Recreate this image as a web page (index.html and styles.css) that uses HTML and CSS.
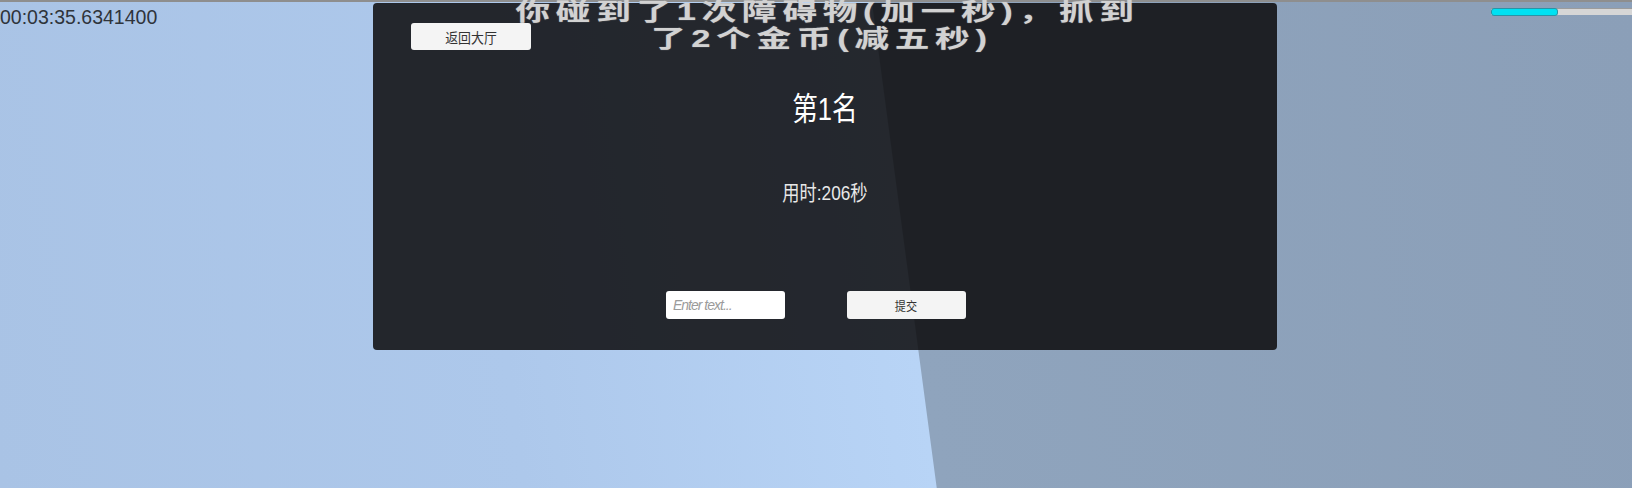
FILE: index.html
```html
<!DOCTYPE html>
<html lang="zh">
<head>
<meta charset="utf-8">
<title>结算</title>
<link rel="stylesheet" href="styles.css">
</head>
<body>
<div class="screen">
  <div class="timer">00:03:35.6341400</div>
  <section class="panel">
    <button class="btn back"><span class="squeeze">返回大厅</span></button>
    <div class="notice">
      <div class="stretch">
        <span class="notice-line">你碰到了1次障碍物(加一秒)，抓到</span>
        <span class="notice-line notice-line-2">了2个金币(减五秒)</span>
      </div>
    </div>
    <div class="rank"><span class="squeeze">第1名</span></div>
    <div class="time"><span class="squeeze">用时:206秒</span></div>
    <div class="form-row">
      <input class="name-input" type="text" placeholder="Enter text...">
      <button class="btn submit"><span class="squeeze">提交</span></button>
    </div>
  </section>
  <div class="progress"><div class="progress-fill" style="width:67px"></div></div>
</div>
</body>
</html>
```

FILE: styles.css
```css
html, body {
  margin: 0;
  padding: 0;
  overflow: hidden;
}

body {
  font-family: "Liberation Sans", "Noto Sans CJK SC", sans-serif;
}

.screen {
  width: 1632px;
  height: 488px;
  box-sizing: border-box;
  border-top: 2px solid #8e8e8e;
  background-origin: border-box;
  background-image: linear-gradient(82.4deg, #a9c3e5 0px, #adc8eb 520px, #b8d4f6 928px, #8fa4bd 929px, #8b9fb8 100%);
  display: grid;
  grid-template-columns: 373px 904px 1fr;
  align-items: start;
}

.timer {
  padding-top: 4px;
  font-size: 19.5px;
  line-height: 22px;
  color: #2f343b;
  white-space: nowrap;
}

.panel {
  margin-top: 1px;
  height: 347px;
  border-radius: 4px;
  background: rgba(10, 9, 11, 0.85);
  display: grid;
  grid-template-columns: 1fr;
  grid-template-rows: auto auto auto auto 1fr;
  justify-items: center;
  align-items: start;
  font-family: "Liberation Sans", "Noto Sans CJK SC", sans-serif;
}

.squeeze {
  display: inline-block;
}

.btn {
  border: none;
  border-radius: 3px;
  background: #f4f4f4;
  color: #333;
  padding: 0;
  font-family: "Liberation Sans", "Noto Sans CJK SC", sans-serif;
  cursor: pointer;
}

.back {
  grid-area: 1 / 1;
  justify-self: start;
  margin: 20px 0 0 38px;
  width: 120px;
  height: 27px;
  font-size: 14px;
}

.back .squeeze {
  transform: scaleX(0.92);
}

.notice {
  grid-area: 1 / 1;
  margin-top: -5px;
  font-size: 24px;
  line-height: 27px;
  font-weight: bold;
  color: #d2d2d2;
  text-align: center;
}

.stretch {
  white-space: nowrap;
  letter-spacing: 4px;
  padding-left: 4px;
  transform: scaleX(1.44);
  text-shadow: 0 0 1px rgba(210, 210, 210, 0.6);
}

.notice-line {
  display: block;
}

.notice-line-2 {
  margin-right: 8px;
}

.rank {
  margin-top: 37px;
  font-size: 32px;
  line-height: 40px;
  color: #ffffff;
}

.rank .squeeze {
  transform: scaleX(0.8);
}

.time {
  margin-top: 52px;
  font-size: 21px;
  line-height: 24px;
  color: #e8e8e8;
}

.time .squeeze {
  transform: scaleX(0.82);
}

.form-row {
  margin-top: 86px;
  display: flex;
  gap: 62px;
  padding-right: 18px;
}

.name-input {
  width: 119px;
  height: 28px;
  box-sizing: border-box;
  border: none;
  border-radius: 3px;
  background: #ffffff;
  padding: 0 7px;
  font-family: "Liberation Sans", sans-serif;
  font-style: italic;
  font-size: 14px;
  letter-spacing: -1px;
  color: #333;
  outline: none;
}

.name-input::placeholder {
  color: #9b9b9b;
}

.submit {
  width: 119px;
  height: 28px;
  font-size: 12px;
}

.submit .squeeze {
  transform: scaleX(0.93);
}

.progress {
  margin: 6px 0 0 214px;
  height: 8px;
  background: linear-gradient(#9c9c9c 0 1px, #d6d6d6 1px 7px, transparent 7px);
}

.progress-fill {
  height: 8px;
  box-sizing: border-box;
  border: 1px solid #2a93a6;
  border-radius: 3px;
  background: #00e1f2;
}
```
